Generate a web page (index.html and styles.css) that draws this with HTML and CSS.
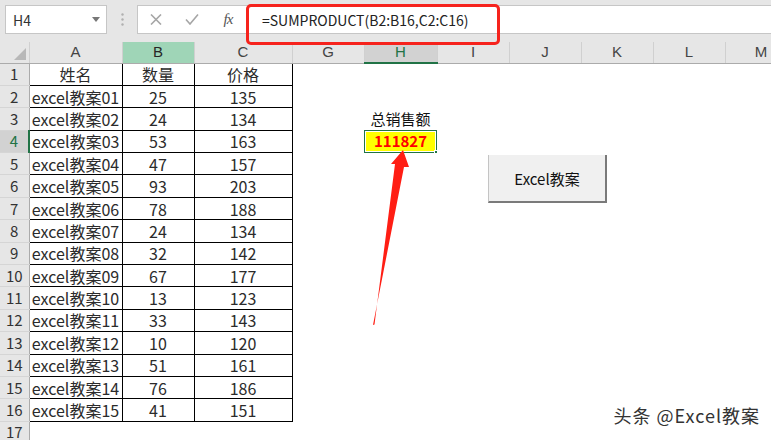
FILE: index.html
```html
<!DOCTYPE html>
<html lang="zh-CN">
<head>
    <meta charset="UTF-8">
    <meta name="viewport" content="width=device-width, initial-scale=1.0">
    <title>SUMPRODUCT 求总销售额</title>
    <link rel="stylesheet" href="styles.css">
</head>
<body>
    <!-- 名称框 + 编辑栏 -->
    <div class="topbar">
        <div class="namebox">
            <span>H4</span>
            <span class="caret"></span>
        </div>
        <div class="grip">
            <svg width="3" height="13" viewBox="0 0 3 13"><circle cx="1.5" cy="1.5" r="1.2"/><circle cx="1.5" cy="6.5" r="1.2"/><circle cx="1.5" cy="11.5" r="1.2"/></svg>
        </div>
        <div class="formula">
            <span class="fbtn">
                <svg width="12" height="11" viewBox="0 0 12 11"><path d="M1 0.5l10 10M11 0.5l-10 10"/></svg>
            </span>
            <span class="fbtn">
                <svg width="14" height="11" viewBox="0 0 14 11"><path d="M1 5.5l4 4.5 8-9.5"/></svg>
            </span>
            <span class="fbtn fx">fx</span>
            <div class="ftext">=SUMPRODUCT(B2:B16,C2:C16)</div>
        </div>
        <div class="mark"></div>
    </div>

    <!-- 工作表 -->
    <table class="sheet">
        <colgroup>
            <col class="c-rh">
            <col class="c-a">
            <col class="c-b">
            <col class="c-c">
            <col class="c-std">
            <col class="c-h">
            <col class="c-std">
            <col class="c-std">
            <col class="c-std">
            <col class="c-std">
            <col class="c-std">
        </colgroup>
        <tr class="head">
            <th class="corner"><span class="tri"></span></th>
            <th>A</th><th class="hl">B</th><th>C</th><th>G</th><th class="act">H</th><th>I</th><th>J</th><th>K</th><th>L</th><th>M</th>
        </tr>
        <tr><th class="rh">1</th><td class="t">姓名</td><td class="t">数量</td><td class="t">价格</td><td></td><td></td><td></td><td></td><td></td><td></td><td></td></tr>
        <tr><th class="rh">2</th><td class="t">excel教案01</td><td class="t">25</td><td class="t">135</td><td></td><td></td><td></td><td></td><td></td><td></td><td></td></tr>
        <tr><th class="rh">3</th><td class="t">excel教案02</td><td class="t">24</td><td class="t">134</td><td></td><td class="label">总销售额</td><td></td><td></td><td></td><td></td><td></td></tr>
        <tr><th class="rh act">4</th><td class="t">excel教案03</td><td class="t">53</td><td class="t">163</td><td></td><td class="total">111827</td><td></td><td></td><td></td><td></td><td></td></tr>
        <tr><th class="rh">5</th><td class="t">excel教案04</td><td class="t">47</td><td class="t">157</td><td></td><td></td><td></td><td></td><td></td><td></td><td></td></tr>
        <tr><th class="rh">6</th><td class="t">excel教案05</td><td class="t">93</td><td class="t">203</td><td></td><td></td><td></td><td></td><td></td><td></td><td></td></tr>
        <tr><th class="rh">7</th><td class="t">excel教案06</td><td class="t">78</td><td class="t">188</td><td></td><td></td><td></td><td></td><td></td><td></td><td></td></tr>
        <tr><th class="rh">8</th><td class="t">excel教案07</td><td class="t">24</td><td class="t">134</td><td></td><td></td><td></td><td></td><td></td><td></td><td></td></tr>
        <tr><th class="rh">9</th><td class="t">excel教案08</td><td class="t">32</td><td class="t">142</td><td></td><td></td><td></td><td></td><td></td><td></td><td></td></tr>
        <tr><th class="rh">10</th><td class="t">excel教案09</td><td class="t">67</td><td class="t">177</td><td></td><td></td><td></td><td></td><td></td><td></td><td></td></tr>
        <tr><th class="rh">11</th><td class="t">excel教案10</td><td class="t">13</td><td class="t">123</td><td></td><td></td><td></td><td></td><td></td><td></td><td></td></tr>
        <tr><th class="rh">12</th><td class="t">excel教案11</td><td class="t">33</td><td class="t">143</td><td></td><td></td><td></td><td></td><td></td><td></td><td></td></tr>
        <tr><th class="rh">13</th><td class="t">excel教案12</td><td class="t">10</td><td class="t">120</td><td></td><td></td><td></td><td></td><td></td><td></td><td></td></tr>
        <tr><th class="rh">14</th><td class="t">excel教案13</td><td class="t">51</td><td class="t">161</td><td></td><td></td><td></td><td></td><td></td><td></td><td></td></tr>
        <tr><th class="rh">15</th><td class="t">excel教案14</td><td class="t">76</td><td class="t">186</td><td></td><td></td><td></td><td></td><td></td><td></td><td></td></tr>
        <tr><th class="rh">16</th><td class="t">excel教案15</td><td class="t">41</td><td class="t">151</td><td></td><td></td><td></td><td></td><td></td><td></td><td></td></tr>
        <tr><th class="rh">17</th><td></td><td></td><td></td><td></td><td></td><td></td><td></td><td></td><td></td><td></td></tr>
    </table>

    <!-- 表单按钮 -->
    <div class="btn">Excel教案</div>

    <!-- 标注箭头 -->
    <svg class="arrow" width="55" height="185" viewBox="0 0 55 185">
        <polygon points="43,4 49,21 44,21 13,179 14.5,178.5 35,18 31,18"/>
    </svg>

    <div class="watermark">头条 @Excel教案</div>
</body>
</html>
```

FILE: styles.css
```css
body {
    margin: 0;
    width: 771px;
    height: 440px;
    overflow: hidden;
    position: relative;
    background: #fff;
    font-family: "Noto Sans CJK SC", sans-serif;
    color: #2b2b2b;
}

/* 编辑栏 */
.topbar {
    position: relative;
    height: 42px;
    background: #e6e6e6;
    display: flex;
    align-items: flex-start;
    padding-top: 5px;
    box-sizing: border-box;
}

.namebox {
    margin-left: 5px;
    width: 102px;
    height: 29px;
    box-sizing: border-box;
    background: #fff;
    border: 1px solid #c6c6c6;
    display: flex;
    align-items: center;
    justify-content: space-between;
    padding: 0 6px 0 7px;
    font-size: 14px;
    color: #333;
}

.caret {
    width: 0;
    height: 0;
    border-left: 4px solid transparent;
    border-right: 4px solid transparent;
    border-top: 5px solid #777;
}

.grip {
    width: 30px;
    height: 29px;
    display: flex;
    align-items: center;
    justify-content: center;
    fill: #b0b0b0;
}

.formula {
    flex: 1;
    height: 29px;
    box-sizing: border-box;
    background: #fff;
    border: 1px solid #c6c6c6;
    border-right: none;
    display: flex;
    align-items: center;
}

.fbtn {
    width: 36px;
    display: flex;
    justify-content: center;
    align-items: center;
    stroke: #a6a6a6;
    stroke-width: 1.6;
    fill: none;
}

.fx {
    font-family: "Liberation Serif", serif;
    font-style: italic;
    font-size: 15px;
    color: #555;
    letter-spacing: -1px;
}

.ftext {
    padding-left: 16px;
    font-size: 14px;
    color: #222;
}

.mark {
    position: absolute;
    left: 246px;
    top: 4px;
    width: 254px;
    height: 41px;
    box-sizing: border-box;
    border: 3px solid #f6231d;
    border-radius: 5px;
    z-index: 3;
}

/* 工作表 */
.sheet {
    border-collapse: collapse;
    table-layout: fixed;
    width: 797px;
}

.c-rh { width: 29px; }
.c-a { width: 93px; }
.c-b { width: 72px; }
.c-c { width: 98px; }
.c-h { width: 73px; }
.c-std { width: 72px; }

.sheet tr {
    height: 22.4px;
}

.sheet tr.head {
    height: 20px;
}

.sheet th,
.sheet td {
    padding: 0;
    text-align: center;
    white-space: nowrap;
    overflow: hidden;
    line-height: 20px;
}

.head th {
    background: #e6e6e6;
    border-right: 1px solid #d0d0d0;
    border-bottom: 1px solid #ababab;
    font-family: "Liberation Sans", sans-serif;
    font-weight: normal;
    font-size: 15px;
    color: #444;
}

.head th.hl {
    background: #9fd5b7;
    color: #262626;
}

.head th.act {
    background: #d2d2d2;
    color: #217346;
    border-bottom: 2px solid #217346;
}

.corner {
    position: relative;
}

.tri {
    position: absolute;
    right: 3px;
    bottom: 3px;
    width: 0;
    height: 0;
    border-left: 12px solid transparent;
    border-bottom: 12px solid #b8b8b8;
}

.rh {
    background: #e6e6e6;
    border-right: 1px solid #ababab;
    border-bottom: 1px solid #d5d5d5;
    font-weight: normal;
    font-size: 15px;
    color: #333;
}

.rh.act {
    background: #d2d2d2;
    color: #217346;
    border-right: 2px solid #217346;
}

.t {
    border: 1px solid #000;
    font-size: 16px;
}

.label {
    font-size: 15px;
    color: #111;
}

.total {
    position: relative;
    background: #ffff00;
    color: #ff0000;
    font-weight: bold;
    font-size: 15px;
    overflow: visible;
}

/* 选中框 + 填充柄 */
.total::after {
    content: "";
    position: absolute;
    left: -1px;
    top: -1px;
    right: -1px;
    bottom: -1px;
    border: 2px solid #217346;
    box-shadow: inset 0 0 0 1px #fff;
}

.total::before {
    content: "";
    position: absolute;
    right: -4px;
    bottom: -4px;
    width: 5px;
    height: 5px;
    background: #217346;
    border: 1px solid #fff;
    z-index: 1;
}

.btn {
    position: absolute;
    left: 488px;
    top: 155px;
    width: 119px;
    height: 48px;
    box-sizing: border-box;
    background: #f0f0f0;
    border-left: 1px solid #c4c4c4;
    border-right: 2px solid #7a7a7a;
    border-bottom: 2px solid #7a7a7a;
    display: flex;
    align-items: center;
    justify-content: center;
    font-size: 15px;
    color: #111;
}

.arrow {
    position: absolute;
    left: 360px;
    top: 146px;
    fill: #ff1e14;
}

.watermark {
    position: absolute;
    right: 11px;
    top: 402px;
    font-size: 18px;
    letter-spacing: 1px;
    color: #333;
    text-shadow: 0 0 2px #fff, 0 0 2px #fff;
}
```
